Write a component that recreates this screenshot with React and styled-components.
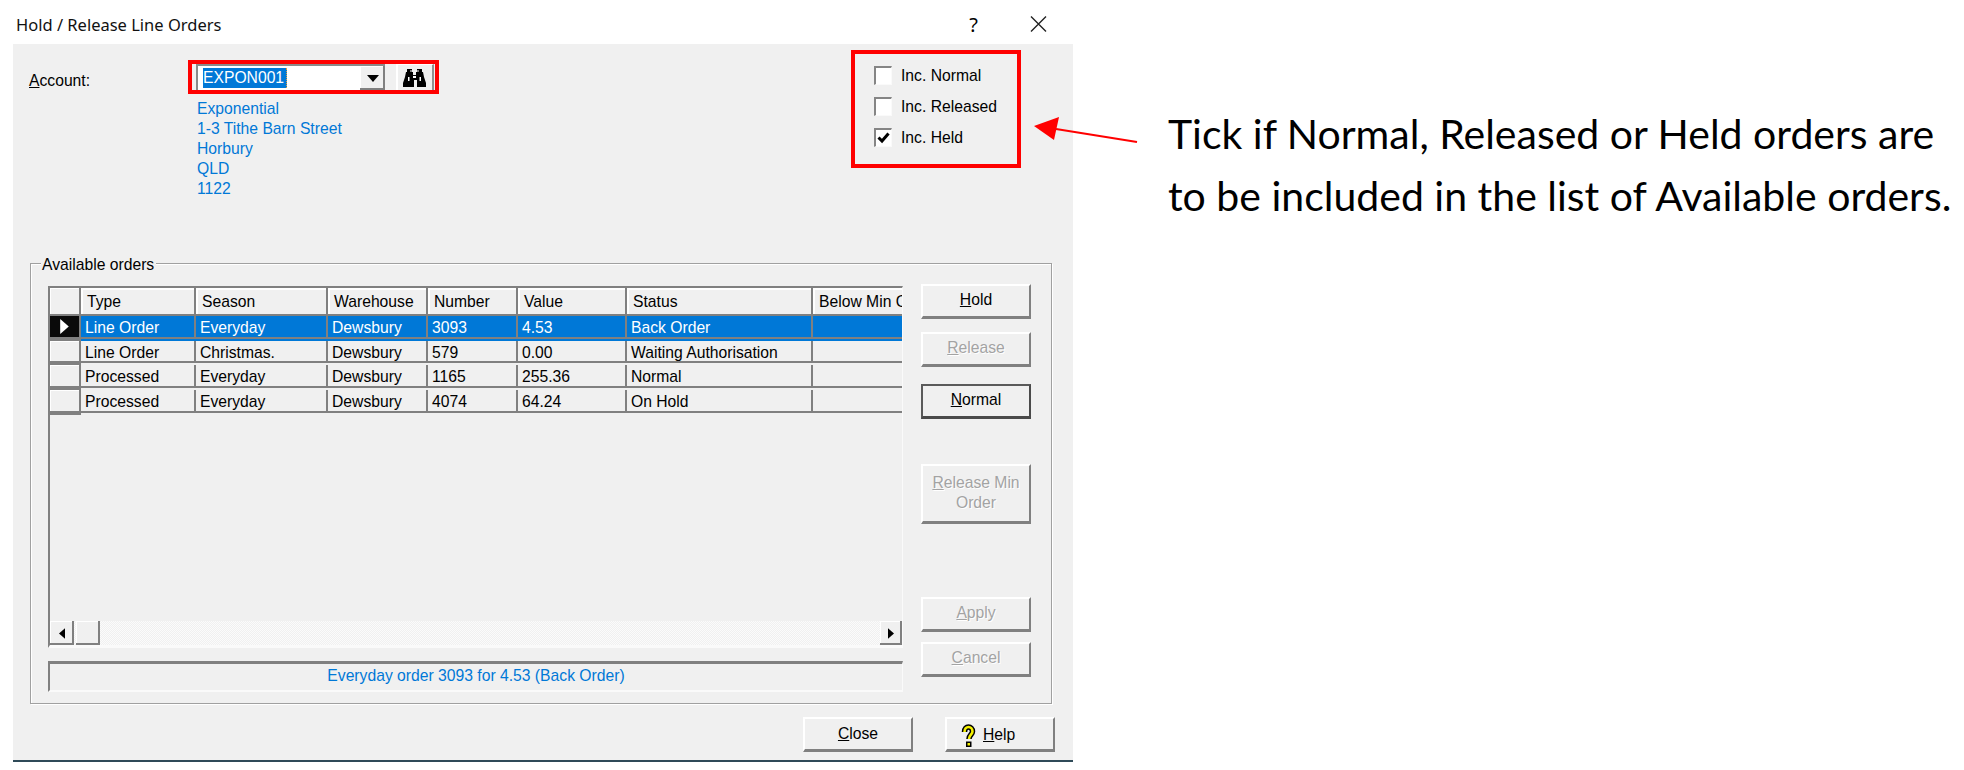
import React from "react";
import styled, { createGlobalStyle } from "styled-components";

const Global = createGlobalStyle`
  html, body { margin: 0; padding: 0; background: #fff; }
  * { box-sizing: border-box; }
`;

const Page = styled.div`
  position: relative;
  display: flex;
  align-items: flex-start;
  width: 1964px;
  height: 770px;
  overflow: hidden;
  background: #fff;
  font-family: "Liberation Sans", Arial, sans-serif;
  font-size: 15.7px;
  color: #000;
`;

const Dialog = styled.div`
  width: 1073px;
  flex: none;
`;

const TitleBar = styled.div`
  height: 44px;
  display: flex;
  align-items: center;
  padding: 4px 26px 0 16px;
`;

const Title = styled.div`
  flex: 1;
  font-family: "Noto Sans", sans-serif;
  font-size: 16.5px;
  color: #111;
`;

const Question = styled.div`
  font-family: "Noto Sans", sans-serif;
  font-size: 20px;
  margin-right: 52px;
`;

const Panel = styled.div`
  margin-left: 13px;
  height: 718px;
  padding-left: 16px;
  background: #f0f0f0;
  border-bottom: 2px solid #2f4a58;
`;

const TopRow = styled.div`
  height: 219px;
  display: flex;
  justify-content: space-between;
  align-items: flex-start;
`;

const AccountBlock = styled.div`
  display: flex;
  margin-top: 16px;
`;

const FieldLabel = styled.div`
  width: 159px;
  margin-top: 12px;
`;

const RedBox = styled.div`
  border: 4px solid #f00;
`;

const AccountBox = styled(RedBox)`
  width: 251px;
  height: 34px;
  display: flex;
  padding-left: 4px;
`;

const Combo = styled.div`
  width: 189px;
  height: 26px;
  display: flex;
  align-items: stretch;
  background: #fff;
  border-top: 2px solid #8a8a8a;
  border-left: 2px solid #8a8a8a;
`;

const ComboValue = styled.div`
  flex: 1;
  padding: 2px 0 0 5px;
`;

const Selection = styled.span`
  display: inline-block;
  width: 84px;
  height: 20px;
  line-height: 20px;
  background: #0078d7;
  color: #fff;
  border-right: 1px dotted #e89a3c;
  white-space: nowrap;
`;

const ComboButton = styled.div`
  width: 25px;
  display: flex;
  align-items: center;
  justify-content: center;
  background: #f0f0f0;
  box-shadow: inset -2px -2px 0 #808080, inset 1px 1px 0 #fff;
`;

const FindButton = styled.div`
  width: 38px;
  height: 26px;
  margin-left: 11px;
  padding-right: 2px;
  display: flex;
  align-items: center;
  justify-content: center;
  background: #f0f0f0;
  border-top: 1px solid #fff;
  border-left: 2px solid #fff;
  border-right: 2px solid #909090;
`;

const Address = styled.div`
  margin: 5px 0 0 9px;
  color: #0078d7;
  line-height: 20px;
`;

const OptionsBox = styled(RedBox)`
  width: 170px;
  height: 118px;
  margin: 6px 52px 0 0;
  padding: 12px 0 0 19px;
  display: flex;
  flex-direction: column;
  gap: 12px;
`;

const CheckRow = styled.div`
  height: 19px;
  display: flex;
  align-items: center;
  gap: 9px;
`;

const CheckBox = styled.div`
  width: 18px;
  height: 19px;
  display: flex;
  align-items: center;
  justify-content: center;
  background: #fff;
  border-top: 2px solid #858585;
  border-left: 2px solid #858585;
  border-right: 1px solid #fafafa;
  border-bottom: 1px solid #fafafa;
`;

const GroupBox = styled.div`
  position: relative;
  width: 1022px;
  height: 441px;
  margin-left: 1px;
  padding: 20px 0 0 17px;
  display: flex;
  border: 1px solid #a0a0a0;
  box-shadow: inset 1px 1px 0 #fff, 1px 1px 0 #fff;
`;

const Legend = styled.div`
  position: absolute;
  top: -9px;
  left: 10px;
  padding: 0 2px 0 1px;
  line-height: 20px;
  background: #f0f0f0;
`;

const MainColumn = styled.div`
  width: 855px;
  margin-top: 2px;
`;

const GridFrame = styled.div`
  height: 362px;
  display: flex;
  flex-direction: column;
  border-top: 2px solid #808080;
  border-left: 2px solid #808080;
  border-bottom: 3px solid #fafafa;
  border-right: 1px solid #fafafa;
`;

const GridView = styled.div`
  flex: 1;
  overflow: hidden;
`;

const GridRow = styled.div`
  width: 912px;
  height: ${(p) => (p.$header ? "28px" : "24.67px")};
  display: grid;
  grid-template-columns: 31px 115px 132px 100px 90px 109px 186px 149px;
  background: ${(p) => (p.$selected ? "#0078d7" : "#f0f0f0")};
  color: ${(p) => (p.$selected ? "#fff" : "#000")};
`;

const Cell = styled.div`
  padding-left: ${(p) => (p.$header ? "6px" : "4px")};
  border-right: 2px solid #808080;
  border-bottom: 2px solid #808080;
  line-height: ${(p) => (p.$header ? "27px" : "24px")};
  white-space: nowrap;
  overflow: hidden;
  box-shadow: ${(p) => (p.$header ? "inset 2px 2px 0 #fff" : "none")};
`;

const Indicator = styled.div`
  display: flex;
  align-items: center;
  justify-content: center;
  background: ${(p) => (p.$active ? "#0a0a0a" : "#f0f0f0")};
  border-right: 2px solid #808080;
  border-bottom: 2px solid #808080;
  box-shadow: ${(p) => (p.$active ? "none" : "inset 1px 1px 0 #fff")};
`;

const ScrollBar = styled.div`
  height: 24px;
  display: flex;
  flex: none;
  background-color: #f0f0f0;
  background-image: conic-gradient(#fbfbfb 25%, #f0f0f0 0 50%, #fbfbfb 0 75%, #f0f0f0 0);
  background-size: 2px 2px;
`;

const ScrollButton = styled.div`
  width: ${(p) => p.$width}px;
  margin-left: ${(p) => p.$left || 0}px;
  display: flex;
  align-items: center;
  justify-content: center;
  background: #f0f0f0;
  box-shadow: inset -2px -2px 0 #808080, inset 1px 1px 0 #fff;
`;

const ScrollTrack = styled.div`
  flex: 1;
`;

const StatusBar = styled.div`
  height: 31px;
  margin-top: 13px;
  padding-top: 1px;
  text-align: center;
  line-height: 22px;
  color: #0078d7;
  border-top: 3px solid #808080;
  border-left: 2px solid #808080;
  border-bottom: 2px solid #fafafa;
  border-right: 1px solid #fafafa;
`;

const ButtonColumn = styled.div`
  width: 110px;
  margin-left: 18px;
  display: flex;
  flex-direction: column;
`;

const Button = styled.div`
  width: 110px;
  height: ${(p) => p.$height || 35}px;
  margin-top: ${(p) => p.$gap || 0}px;
  display: flex;
  align-items: center;
  justify-content: center;
  text-align: center;
  line-height: 20.500px;
  padding-bottom: 1px;
  background: #f0f0f0;
  color: ${(p) => (p.$disabled ? "#a3a3a3" : "#000")};
  text-shadow: ${(p) => (p.$disabled ? "1px 1px 0 #fff" : "none")};
  border-top: 2px solid ${(p) => (p.$default ? "#5a5a5a" : "#fff")};
  border-left: 2px solid ${(p) => (p.$default ? "#5a5a5a" : "#fff")};
  border-right: 2px solid ${(p) => (p.$default ? "#4a4a4a" : "#808080")};
  border-bottom: 3px solid ${(p) => (p.$default ? "#4a4a4a" : "#808080")};
`;

const FooterButton = styled(Button)`
  padding: 1px 0 0;
`;

const HelpButton = styled(FooterButton)`
  justify-content: flex-start;
  gap: 7px;
  padding: 2px 0 0 14px;
`;

const Footer = styled.div`
  margin: 13px 18px 0 0;
  display: flex;
  justify-content: flex-end;
  gap: 32px;
`;

const Annotation = styled.div`
  margin: 103px 0 0 95px;
  width: 790px;
  font-family: "Lato", sans-serif;
  font-size: 41px;
  line-height: 62px;
  white-space: nowrap;
`;

const ArrowOverlay = styled.svg`
  position: absolute;
  top: 0;
  left: 0;
  pointer-events: none;
`;

const Triangle = ({ dir = "right", color = "#000", w = 8, h = 14 }) => (
  <svg width={w} height={h} viewBox="0 0 8 14">
    <path d={dir === "right" ? "M0 0L8 7L0 14Z" : "M8 0L0 7L8 14Z"} fill={color} />
  </svg>
);

const Binoculars = () => (
  <svg width="23" height="20" viewBox="0 0 23 20">
    <path
      fill="#000"
      d="M4 1h5v3h1v3h3V4h1V1h5v3h1l1 5 2 6v4h-9v-7h-3v7H0v-4l2-6 1-5h1z"
    />
    <path fill="#fff" d="M5 9h1.500v4H5zM16.500 9H18v4h-1.500zM10 8h3v2h-3zM7.500 2h1v2h-1zM14.500 2h1v2h-1z" />
  </svg>
);

const HelpIcon = () => (
  <svg width="15" height="23" viewBox="0 0 15 23">
    <path
      d="M3.500 8C3.500 4.500 5.500 3 7.500 3s4 1.500 4 4.500-3.500 3.500-3.500 7.500"
      fill="none"
      stroke="#000"
      strokeWidth="5.500"
    />
    <path
      d="M3.500 8C3.500 4.500 5.500 3 7.500 3s4 1.500 4 4.500-3.500 3.500-3.500 7.500"
      fill="none"
      stroke="#f4f000"
      strokeWidth="2.600"
    />
    <rect x="5" y="17.500" width="5.500" height="5.500" fill="#000" />
    <rect x="6.500" y="19" width="2.500" height="2.500" fill="#f4f000" />
  </svg>
);

const columns = ["Type", "Season", "Warehouse", "Number", "Value", "Status", "Below Min Order"];
const rows = [
  ["Line Order", "Everyday", "Dewsbury", "3093", "4.53", "Back Order", ""],
  ["Line Order", "Christmas.", "Dewsbury", "579", "0.00", "Waiting Authorisation", ""],
  ["Processed", "Everyday", "Dewsbury", "1165", "255.36", "Normal", ""],
  ["Processed", "Everyday", "Dewsbury", "4074", "64.24", "On Hold", ""],
];

const options = [
  ["Inc. Normal", false],
  ["Inc. Released", false],
  ["Inc. Held", true],
];

export default function App() {
  return (
    <Page>
      <Global />
      <Dialog>
        <TitleBar>
          <Title>Hold / Release Line Orders</Title>
          <Question>?</Question>
          <svg width="17" height="16" viewBox="0 0 17 16">
            <path d="M1 0.500L16 15.500M16 0.500L1 15.500" stroke="#222" strokeWidth="1.400" fill="none" />
          </svg>
        </TitleBar>
        <Panel>
          <TopRow>
            <AccountBlock>
              <FieldLabel>
                <u>A</u>ccount:
              </FieldLabel>
              <div>
                <AccountBox>
                  <Combo>
                    <ComboValue>
                      <Selection>EXPON001</Selection>
                    </ComboValue>
                    <ComboButton>
                      <svg width="12" height="7" viewBox="0 0 12 7">
                        <path d="M0 0H12L6 7Z" fill="#000" />
                      </svg>
                    </ComboButton>
                  </Combo>
                  <FindButton>
                    <Binoculars />
                  </FindButton>
                </AccountBox>
                <Address>
                  <div>Exponential</div>
                  <div>1-3 Tithe Barn Street</div>
                  <div>Horbury</div>
                  <div>QLD</div>
                  <div>1122</div>
                </Address>
              </div>
            </AccountBlock>
            <OptionsBox>
              {options.map(([label, checked]) => (
                <CheckRow key={label}>
                  <CheckBox>
                    {checked && (
                      <svg width="13" height="12" viewBox="0 0 13 12">
                        <path d="M1.500 5.500L5 9L11.500 1.500" stroke="#000" strokeWidth="3" fill="none" />
                      </svg>
                    )}
                  </CheckBox>
                  <span>{label}</span>
                </CheckRow>
              ))}
            </OptionsBox>
          </TopRow>
          <GroupBox>
            <Legend>Available orders</Legend>
            <MainColumn>
              <GridFrame>
                <GridView>
                  <GridRow $header>
                    <Indicator />
                    {columns.map((c) => (
                      <Cell $header key={c}>
                        {c}
                      </Cell>
                    ))}
                  </GridRow>
                  {rows.map((r, i) => (
                    <GridRow key={r[3]} $selected={i === 0}>
                      <Indicator $active={i === 0}>
                        {i === 0 && <Triangle color="#fff" w={9} h={15} />}
                      </Indicator>
                      {r.map((v, j) => (
                        <Cell key={columns[j]}>{v}</Cell>
                      ))}
                      <Cell />
                    </GridRow>
                  ))}
                </GridView>
                <ScrollBar>
                  <ScrollButton $width={24}>
                    <Triangle dir="left" w={6} h={11} />
                  </ScrollButton>
                  <ScrollButton $width={24} $left={2} />
                  <ScrollTrack />
                  <ScrollButton $width={22}>
                    <Triangle w={6} h={11} />
                  </ScrollButton>
                </ScrollBar>
              </GridFrame>
              <StatusBar>Everyday order 3093 for 4.53 (Back Order)</StatusBar>
            </MainColumn>
            <ButtonColumn>
              <Button>
                <span>
                  <u>H</u>old
                </span>
              </Button>
              <Button $gap={13} $disabled>
                <span>
                  <u>R</u>elease
                </span>
              </Button>
              <Button $gap={17} $default>
                <span>
                  <u>N</u>ormal
                </span>
              </Button>
              <Button $gap={45} $height={60} $disabled>
                <span>
                  <u>R</u>elease Min
                  <br />
                  Order
                </span>
              </Button>
              <Button $gap={73} $disabled>
                <span>
                  <u>A</u>pply
                </span>
              </Button>
              <Button $gap={10} $disabled>
                <span>
                  <u>C</u>ancel
                </span>
              </Button>
            </ButtonColumn>
          </GroupBox>
          <Footer>
            <FooterButton>
              <span>
                <u>C</u>lose
              </span>
            </FooterButton>
            <HelpButton>
              <HelpIcon />
              <span>
                <u>H</u>elp
              </span>
            </HelpButton>
          </Footer>
        </Panel>
      </Dialog>
      <Annotation>
        <div>Tick if Normal, Released or Held orders are</div>
        <div>to be included in the list of Available orders.</div>
      </Annotation>
      <ArrowOverlay width="1964" height="770" viewBox="0 0 1964 770">
        <path d="M1056 129L1137 142" stroke="#f00" strokeWidth="2" fill="none" />
        <path d="M1034 126L1059 117L1054 140Z" fill="#f00" />
      </ArrowOverlay>
    </Page>
  );
}
